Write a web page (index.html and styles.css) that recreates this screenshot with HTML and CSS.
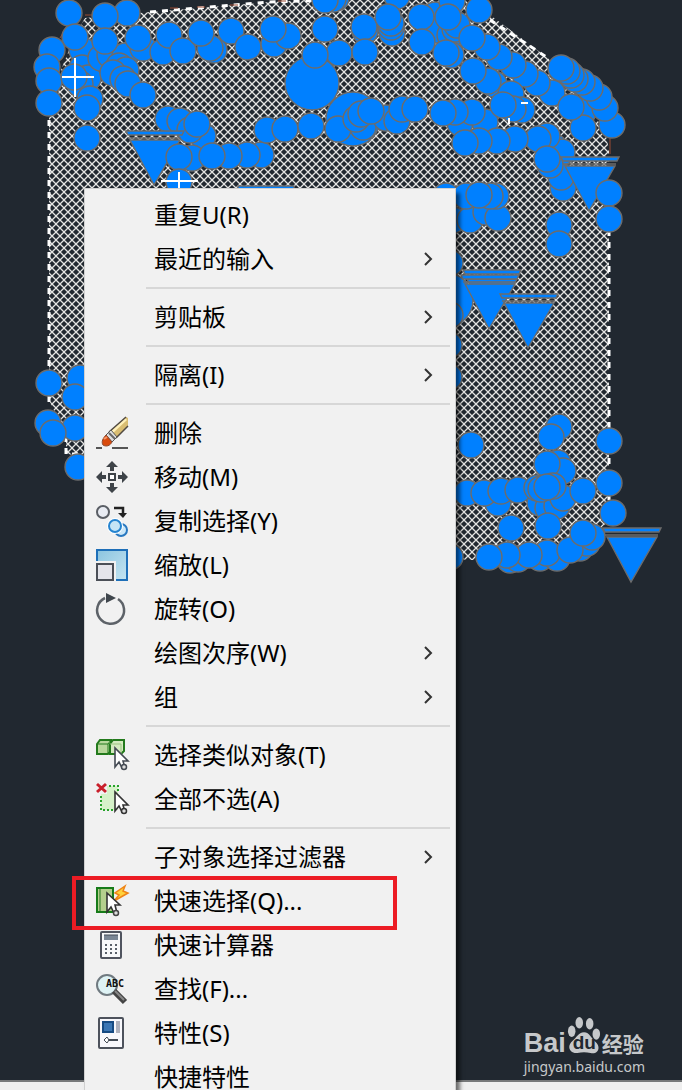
FILE: index.html
```
<!DOCTYPE html>
<html lang="zh-CN">
<head>
<meta charset="utf-8">
<title>快速选择</title>
<meta name="viewport" content="width=device-width, initial-scale=1">
<link rel="stylesheet" href="styles.css">
</head>
<body>
<main class="workspace">
<svg class="drawing" width="682" height="600" viewBox="0 0 682 600" aria-hidden="true">
<defs>
<pattern id="hatch" width="8" height="8" patternUnits="userSpaceOnUse"><path d="M-1-1 9 9M-1 9 9-1" stroke="#e4e4e2" stroke-width="1.3"/></pattern>
<circle id="n" r="13"/>
<g id="t"><path d="M-28-54H30L28-50H-26Z"/><path d="M-26-47H27" stroke-width="1.5"/><path d="M-24-45H26L0 0Z"/></g>
</defs>
<path class="hatch" d="M75 35 85 18 150 12 270 2 400-5H463L548 58 605 130 609 150V520L570 560H466L84 456 66 454 66 436 49 400V100Z"/>
<path class="edge" d="M49 120V405M609 230V530M150 12 270 2 330 0M490 20 548 58M66 436V454H84"/>
<path class="trace" d="M60 38 67 26M85 15H92M610 138V154M170 8H178M197 7H205M230 5H238M278 1H286"/>
<g class="nodes">
<use href="#n" x="92" y="53"/><use href="#n" x="82" y="50"/><use href="#n" x="82" y="68"/><use href="#n" x="88" y="78"/><use href="#n" x="80" y="84"/><use href="#n" x="90" y="99"/><use href="#n" x="101" y="58"/><use href="#n" x="110" y="55"/><use href="#n" x="125" y="56"/><use href="#n" x="119" y="66"/><use href="#n" x="126" y="70"/><use href="#n" x="113" y="73"/><use href="#n" x="123" y="79"/><use href="#n" x="128" y="84"/><use href="#n" x="143" y="95"/><use href="#n" x="143" y="48"/><use href="#n" x="163" y="52"/><use href="#n" x="169" y="35"/><use href="#n" x="183" y="51"/><use href="#n" x="214" y="50"/><use href="#n" x="210" y="48"/><use href="#n" x="201" y="33"/><use href="#n" x="231" y="31"/><use href="#n" x="248" y="47"/>
<use href="#n" x="69" y="13"/><use href="#n" x="127" y="13"/><use href="#n" x="105" y="16"/><use href="#n" x="75" y="37"/><use href="#n" x="105" y="41"/><use href="#n" x="138" y="38"/><use href="#n" x="52" y="50"/><use href="#n" x="47" y="67"/><use href="#n" x="49" y="81"/><use href="#n" x="49" y="103"/><use href="#n" x="74" y="77"/><use href="#n" x="87" y="108"/><use href="#n" x="87" y="138"/>
<use href="#n" x="168" y="119"/><use href="#n" x="180" y="121"/><use href="#n" x="203" y="136"/><use href="#n" x="190" y="130"/><use href="#n" x="197" y="124"/><use href="#t" x="154" y="185"/><use href="#n" x="192" y="158"/><use href="#n" x="179" y="157"/><use href="#n" x="261" y="155"/><use href="#n" x="247" y="155"/><use href="#n" x="229" y="156"/><use href="#n" x="212" y="156"/><use href="#n" x="179" y="182"/><path d="M238 186H294V190H238Z"/>
<use href="#n" x="274" y="44"/><use href="#n" x="288" y="36"/><use href="#n" x="273" y="29"/><use href="#n" x="336" y="-2"/><use href="#n" x="333" y="-1"/><use href="#n" x="325" y="0"/><use href="#n" x="325" y="29"/><circle cx="312" cy="83" r="27"/><use href="#n" x="339" y="53"/><use href="#n" x="315" y="55"/><use href="#n" x="365" y="31"/><use href="#n" x="364" y="27"/><use href="#n" x="365" y="52"/><use href="#n" x="392" y="33"/><use href="#n" x="391" y="27"/><use href="#n" x="391" y="23"/><use href="#n" x="397" y="-4"/><use href="#n" x="388" y="17"/>
<circle cx="353" cy="119" r="27"/><use href="#n" x="338" y="129"/><use href="#n" x="363" y="127"/><use href="#n" x="356" y="119"/><use href="#n" x="361" y="114"/><use href="#n" x="386" y="118"/><use href="#n" x="397" y="121"/><use href="#n" x="371" y="111"/><use href="#n" x="402" y="109"/><use href="#n" x="415" y="109"/><use href="#n" x="267" y="130"/><use href="#n" x="285" y="129"/><use href="#n" x="311" y="126"/>
<use href="#n" x="435" y="15"/><use href="#n" x="434" y="30"/><use href="#n" x="421" y="17"/><use href="#n" x="422" y="42"/><use href="#n" x="450" y="35"/><use href="#n" x="455" y="29"/><use href="#n" x="457" y="25"/><use href="#n" x="452" y="1"/><use href="#n" x="448" y="17"/><use href="#n" x="451" y="55"/><use href="#n" x="446" y="53"/><use href="#n" x="479" y="10"/>
<use href="#n" x="552" y="93"/><use href="#n" x="537" y="83"/><use href="#n" x="525" y="74"/><use href="#n" x="513" y="65"/><use href="#n" x="499" y="57"/><use href="#n" x="487" y="47"/><use href="#n" x="472" y="38"/><use href="#n" x="494" y="84"/><use href="#n" x="488" y="81"/><use href="#n" x="473" y="71"/><use href="#n" x="583" y="112"/><use href="#n" x="583" y="128"/><use href="#n" x="612" y="125"/><use href="#n" x="605" y="108"/><use href="#n" x="599" y="97"/><use href="#n" x="590" y="88"/><use href="#n" x="582" y="82"/><use href="#n" x="575" y="79"/><use href="#n" x="571" y="75"/><use href="#n" x="567" y="71"/><use href="#n" x="561" y="68"/><use href="#n" x="571" y="107"/>
<use href="#n" x="460" y="123"/><use href="#n" x="485" y="122"/><use href="#n" x="472" y="112"/><use href="#n" x="455" y="112"/><use href="#n" x="443" y="113"/><use href="#n" x="511" y="94"/><use href="#n" x="522" y="110"/><use href="#n" x="513" y="109"/><use href="#n" x="503" y="105"/><use href="#n" x="554" y="147"/><use href="#n" x="562" y="152"/><use href="#n" x="547" y="136"/><use href="#n" x="538" y="139"/><use href="#n" x="515" y="139"/><use href="#n" x="497" y="141"/><use href="#n" x="479" y="141"/><use href="#n" x="465" y="143"/><use href="#n" x="563" y="188"/><use href="#n" x="561" y="177"/><use href="#n" x="550" y="165"/><use href="#n" x="547" y="159"/><use href="#t" x="589" y="211"/><use href="#n" x="609" y="193"/><use href="#n" x="609" y="219"/><use href="#n" x="559" y="225"/><use href="#n" x="559" y="244"/>
<use href="#n" x="446" y="196"/><use href="#n" x="453" y="220"/><use href="#n" x="470" y="220"/><use href="#n" x="486" y="212"/><use href="#n" x="498" y="218"/><use href="#n" x="496" y="196"/><use href="#n" x="490" y="196"/><use href="#n" x="466" y="196"/><use href="#n" x="479" y="195"/><use href="#n" x="450" y="263"/><circle cx="446" cy="300" r="27"/><use href="#n" x="450" y="315"/><use href="#n" x="449" y="345"/><use href="#n" x="449" y="377"/><use href="#t" x="491" y="324"/><use href="#t" x="489" y="329"/><use href="#t" x="528" y="348"/>
<use href="#n" x="471" y="445"/><use href="#n" x="559" y="427"/><use href="#n" x="551" y="437"/><use href="#n" x="558" y="463"/><use href="#n" x="563" y="471"/><use href="#n" x="547" y="464"/><use href="#n" x="609" y="441"/><use href="#n" x="609" y="483"/><use href="#n" x="613" y="513"/><use href="#n" x="498" y="503"/><use href="#n" x="467" y="493"/><use href="#n" x="484" y="493"/><use href="#n" x="501" y="491"/><use href="#n" x="540" y="503"/><use href="#n" x="548" y="508"/><use href="#n" x="557" y="506"/><use href="#n" x="563" y="498"/><use href="#n" x="518" y="490"/><use href="#n" x="537" y="488"/><use href="#n" x="553" y="486"/><use href="#n" x="541" y="489"/><use href="#n" x="583" y="491"/><use href="#n" x="547" y="487"/><use href="#n" x="548" y="526"/><use href="#n" x="511" y="528"/>
<use href="#n" x="450" y="557"/><use href="#n" x="510" y="560"/><use href="#n" x="518" y="559"/><use href="#n" x="540" y="558"/><use href="#n" x="557" y="558"/><use href="#n" x="580" y="548"/><use href="#n" x="587" y="543"/><use href="#n" x="592" y="537"/><use href="#n" x="547" y="553"/><use href="#n" x="570" y="550"/><use href="#n" x="529" y="555"/><use href="#n" x="507" y="555"/><use href="#n" x="489" y="557"/><use href="#n" x="583" y="533"/><use href="#t" x="631" y="582"/>
<use href="#n" x="80" y="378"/><use href="#n" x="49" y="383"/><use href="#n" x="75" y="397"/><use href="#n" x="75" y="428"/><use href="#n" x="48" y="423"/><use href="#n" x="53" y="433"/><use href="#n" x="78" y="467"/>
</g>
<path class="cross" d="M62 77H94M75 58V97M161 181H198M179 172V190M521 103H528M509 118V124"/>
</svg>

<nav class="menu" aria-label="快捷菜单">
<ul class="group">
<li><button class="item"><span class="icon"></span><span class="label">重复U(R)</span></button></li>
<li><button class="item" aria-haspopup="menu"><span class="icon"></span><span class="label">最近的输入</span><svg class="arrow" viewBox="0 0 10 16"><path d="M2 2 8 8 2 14"/></svg></button></li>
</ul>
<ul class="group">
<li><button class="item" aria-haspopup="menu"><span class="icon"></span><span class="label">剪贴板</span><svg class="arrow" viewBox="0 0 10 16"><path d="M2 2 8 8 2 14"/></svg></button></li>
</ul>
<ul class="group">
<li><button class="item" aria-haspopup="menu"><span class="icon"></span><span class="label">隔离(I)</span><svg class="arrow" viewBox="0 0 10 16"><path d="M2 2 8 8 2 14"/></svg></button></li>
</ul>
<ul class="group">
<li><button class="item"><svg class="icon" viewBox="0 0 32 32"><path d="M0 31H6M16 31H32" stroke="#555" stroke-width="2"/><path d="M14 15 30 0 32 1V9L20 21Z" fill="#d9bd72"/><path d="M16 15 30 2" stroke="#fff0b8" stroke-width="3"/><path d="M13 15 30 0M20 21 32 9" stroke="#514a42" stroke-width="1.5"/><path d="m10 18 5-5 6 7-5 5Z" fill="#ddd" stroke="#555"/><path d="m13 16 6 6" stroke="#666" stroke-width="2"/><path d="m10 18 6 7c-2 4-6 5-9 3-2-3 0-7 3-10Z" fill="#d94a0c" stroke="#8c4a30"/><path d="M8 22 11 20" stroke="#f89668" stroke-width="2"/></svg><span class="label">删除</span></button></li>
<li><button class="item"><svg class="icon" viewBox="0 0 32 32"><path d="m16 0 6 6h-4v4h-4V6h-4ZM16 32l-6-6h4v-4h4v4h4ZM0 16l6-6v4h4v4H6v4ZM32 16l-6-6v4h-4v4h4v4Z" fill="#3e4348"/><path d="M13 13h6v6h-6Z" fill="#fff" stroke="#3e4348" stroke-width="2"/></svg><span class="label">移动(M)</span></button></li>
<li><button class="item"><svg class="icon" viewBox="0 0 32 32"><circle cx="7" cy="7" r="6" fill="#e8ebf2" stroke="#5a5e65" stroke-width="2"/><path d="M18 3H27V9" fill="none" stroke="#222" stroke-width="2.5"/><path d="M22 8H31L27 13Z" fill="#222"/><circle cx="25" cy="25" r="6" fill="#cbe7f8" stroke="#2878c0" stroke-width="2"/><circle cx="19" cy="21" r="8" fill="#fff"/><circle cx="19" cy="21" r="6" fill="#c5e4f5" stroke="#2584d0" stroke-width="2"/></svg><span class="label">复制选择(Y)</span></button></li>
<li><button class="item"><svg class="icon" viewBox="0 0 32 32"><defs><linearGradient id="sky" x2="1" y2="1"><stop stop-color="#8bc4df"/><stop offset="1" stop-color="#c5e5f2"/></linearGradient></defs><path d="M1 1H31V31H1Z" fill="url(#sky)" stroke="#1e6fb8" stroke-width="2"/><path d="M-1 12H20V33H-1Z" fill="#f1f1f1"/><path d="M1 15H17V31H1Z" fill="#e4e4ea" stroke="#4b4f57" stroke-width="2"/></svg><span class="label">缩放(L)</span></button></li>
<li><button class="item"><svg class="icon" viewBox="0 0 32 32"><path d="M22 6A13.500 13.500 0 1 1 9 5" fill="none" stroke="#5d6268" stroke-width="2.500"/><path d="M10 0 20 5 10 10Z" fill="#3f464c"/></svg><span class="label">旋转(O)</span></button></li>
<li><button class="item" aria-haspopup="menu"><span class="icon"></span><span class="label">绘图次序(W)</span><svg class="arrow" viewBox="0 0 10 16"><path d="M2 2 8 8 2 14"/></svg></button></li>
<li><button class="item" aria-haspopup="menu"><span class="icon"></span><span class="label">组</span><svg class="arrow" viewBox="0 0 10 16"><path d="M2 2 8 8 2 14"/></svg></button></li>
</ul>
<ul class="group">
<li><button class="item"><svg class="icon" viewBox="0 0 32 32"><path d="m1 5 3-4H15V12L12 15H1Z" fill="#b9d89c" stroke="#237a1c" stroke-width="2"/><path d="M1 5H12V15M12 5 15 1" fill="none" stroke="#237a1c"/><path d="m14 5 3-4H28V12L25 15H14Z" fill="#d5ebbf" stroke="#237a1c" stroke-width="2"/><path d="M14 5H25V15" fill="none" stroke="#9bc580"/><path d="M19 9V28L23 23 26 29H29L27 22H32Z" fill="#fff" stroke="#444a53" stroke-width="1.6"/><circle cx="28" cy="28" r="2.5" fill="#ddd" stroke="#444a53" stroke-width="1.5"/></svg><span class="label">选择类似对象(T)</span></button></li>
<li><button class="item"><svg class="icon" viewBox="0 0 32 32"><path d="M5 3H22V27H5Z" fill="#d6f2c9"/><path d="M13 3H22V9M5 13V27H19" fill="none" stroke="#27a32a" stroke-width="2" stroke-dasharray="2 2"/><path d="M0 0H11V11H0Z" fill="#f1f1f1"/><path d="m1 1 9 8M10 1 1 9" stroke="#c91f2b" stroke-width="3"/><path d="M19 9V28L23 23 26 29H29L27 22H32Z" fill="#fff" stroke="#333" stroke-width="1.6"/><circle cx="28" cy="28" r="2.5" fill="#ddd" stroke="#333" stroke-width="1.5"/></svg><span class="label">全部不选(A)</span></button></li>
</ul>
<ul class="group">
<li><button class="item" aria-haspopup="menu"><span class="icon"></span><span class="label">子对象选择过滤器</span><svg class="arrow" viewBox="0 0 10 16"><path d="M2 2 8 8 2 14"/></svg></button></li>
<li class="marked"><button class="item"><svg class="icon" viewBox="0 0 32 32"><path d="M1 3H17V27H1Z" fill="#b4cf8d" stroke="#177b19" stroke-width="2"/><path d="M4 4V26" stroke="#6da257" stroke-width="2"/><path d="m29 1-10 7 4 2-5 6 14-8-5-2Z" fill="#ffd23c" stroke="#ef8417" stroke-width="1.5"/><path d="M11 8V27L15 22 18 28H21L19 20H24Z" fill="#fff" stroke="#333" stroke-width="1.6"/><circle cx="20" cy="28" r="2.5" fill="#ddd" stroke="#444" stroke-width="1.5"/></svg><span class="label">快速选择(Q)...</span></button></li>
<li><button class="item"><svg class="icon" viewBox="0 0 32 32"><rect x="5" y="3" width="20" height="26" rx="1" fill="#f7f8fa" stroke="#50545f" stroke-width="2"/><path d="M8 6H22V11H8Z" fill="#7b8796"/><path d="M8 6H22" stroke="#454d58"/><path d="M9 16H21M9 20H21M9 24H21" stroke="#59606a" stroke-width="2" stroke-dasharray="2 3"/></svg><span class="label">快速计算器</span></button></li>
<li><button class="item"><svg class="icon" viewBox="0 0 32 32"><circle cx="11" cy="12" r="10" fill="#dff3f5" stroke="#707a80" stroke-width="2"/><path d="m18 18 11 11" stroke="#444" stroke-width="6"/><path d="m19 18 9 9" stroke="#888" stroke-width="2"/><text class="find-text" x="10" y="14">ABC</text></svg><span class="label">查找(F)...</span></button></li>
<li><button class="item"><svg class="icon" viewBox="0 0 32 32"><rect x="3" y="1" width="24" height="30" rx="1" fill="#f8f8fc" stroke="#4d525c" stroke-width="2"/><path d="M7 5H17V15H7Z" fill="#3b76b4" stroke="#174b83" stroke-width="2"/><path d="M20 4H24V16H20Z" fill="#aeb1bd"/><path d="M11 23H22" stroke="#434b55" stroke-width="2"/><path d="m8 23 3-3 2 3-2 3Z" fill="#fff" stroke="#434b55"/></svg><span class="label">特性(S)</span></button></li>
<li><button class="item"><span class="icon"></span><span class="label">快捷特性</span></button></li>
</ul>
</nav>

<div class="brand">
<div class="brand-row"><span class="brand-bai">Bai</span><span class="paw"><svg viewBox="0 0 36 40" aria-hidden="true"><ellipse cx="5" cy="15" rx="4" ry="6"/><ellipse cx="13" cy="6" rx="4" ry="6"/><ellipse cx="24" cy="7" rx="4" ry="6"/><ellipse cx="31" cy="18" rx="4" ry="6"/><path d="M18 16c6 0 8 7 12 10 7 6 2 14-5 12-5-1-9-1-14 0-8 1-12-7-5-13 4-3 6-9 12-9Z"/></svg><span class="brand-du">du</span></span><span class="brand-name">经验</span></div>
<div class="brand-url">jingyan.baidu.com</div>
</div>
<footer class="status"></footer>
</main>
</body>
</html>
```
FILE: styles.css
```
*, *::before, *::after { box-sizing: border-box; }
body { margin: 0; overflow: hidden; background: #212830; font-family: "Noto Sans", "Noto Sans CJK SC", sans-serif; }
.workspace { position: relative; display: flex; height: 100vh; overflow: hidden; }
.drawing { position: absolute; top: 0; left: 0; }
.hatch { fill: url(#hatch); }
.edge { fill: none; stroke: #fff; stroke-width: 3; stroke-dasharray: 6 6; }
.trace { fill: none; stroke: #9b4a32; stroke-width: 1; }
.nodes { fill: #0080ff; stroke: #6c6c6c; stroke-width: 1.4; }
.cross { stroke: #fff; stroke-width: 2; }

.menu {
  position: relative;
  z-index: 1;
  flex: none;
  align-self: flex-start;
  width: 372px;
  margin: 188px 0 0 84px;
  padding: 4px 0;
  border: 1px solid #d0d0d0;
  background: #f1f1f1;
  box-shadow: 4px 5px 4px rgba(0, 0, 0, .55);
}
.group { margin: 0; padding: 0; list-style: none; }
.group + .group::before {
  content: "";
  display: block;
  height: 2px;
  margin: 6px 5px 6px 61px;
  background: #d7d7d7;
}
.item {
  display: grid;
  grid-template-columns: 32px 1fr 10px;
  column-gap: 26px;
  align-items: center;
  width: 100%;
  height: 44px;
  padding: 0 22px 0 11px;
  border: 0;
  background: transparent;
  color: #000;
  font: inherit;
  font-size: 24px;
  line-height: 44px;
  text-align: left;
}
.icon { width: 32px; height: 32px; }
.label { white-space: nowrap; }
.arrow { width: 10px; height: 16px; fill: none; stroke: #333; stroke-width: 2; }
.find-text { font: bold 10px "DejaVu Sans Mono", monospace; fill: #111; }
.icon { overflow: visible; }
.marked { position: relative; }
.marked::after {
  content: "";
  position: absolute;
  top: -3px;
  left: -13px;
  width: 325px;
  height: 54px;
  border: 4px solid #ec1c24;
  pointer-events: none;
}

.brand { position: absolute; right: 37px; bottom: 13px; color: #c6c8ca; }
.brand-row { display: flex; align-items: flex-end; gap: 1px; height: 40px; }
.brand-bai { font: bold 27px/28px "Liberation Sans", sans-serif; }
.paw { position: relative; width: 34px; height: 40px; }
.paw svg { width: 34px; height: 38px; fill: #c6c8ca; }
.brand-du { position: absolute; bottom: 4px; left: 6px; color: #212830; font: bold 19px/20px "Liberation Sans", sans-serif; }
.brand-name { font: bold 21px/28px "Noto Sans CJK SC", sans-serif; }
.brand-url { font-size: 14px; line-height: 20px; }
.status { position: absolute; right: 0; bottom: 0; left: 0; height: 10px; border-top: 2px solid #77797a; background: #efefef; }
```
